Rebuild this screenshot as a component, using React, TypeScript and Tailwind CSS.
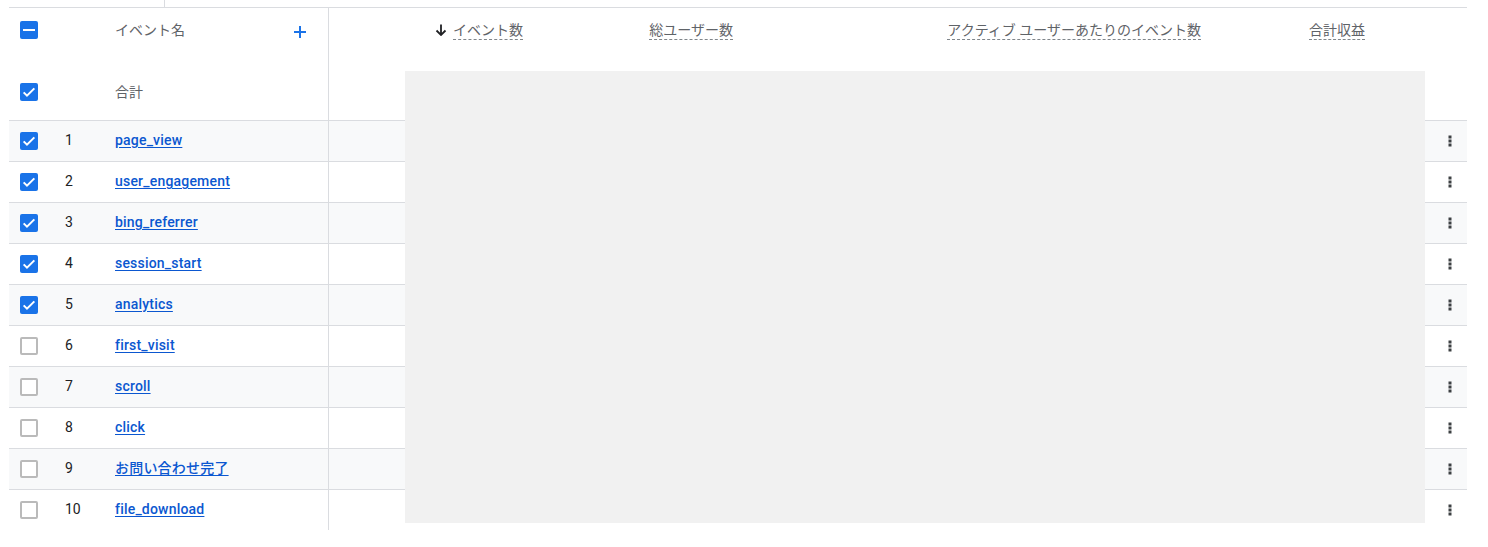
import React from 'react';

const rows = [
  { name: 'page_view', checked: true },
  { name: 'user_engagement', checked: true },
  { name: 'bing_referrer', checked: true },
  { name: 'session_start', checked: true },
  { name: 'analytics', checked: true },
  { name: 'first_visit', checked: false },
  { name: 'scroll', checked: false },
  { name: 'click', checked: false },
  { name: 'お問い合わせ完了', checked: false },
  { name: 'file_download', checked: false },
];

function Checkbox({ state }: { state: 'checked' | 'unchecked' | 'mixed' }) {
  if (state === 'unchecked') {
    return <div className="w-[18px] h-[18px] rounded-[2px] border-2 border-[#bababa] bg-white shrink-0" />;
  }
  return (
    <div className="w-[18px] h-[18px] rounded-[2px] bg-[#1a73e8] flex items-center justify-center shrink-0">
      {state === 'checked' ? (
        <svg width="16" height="16" viewBox="0 0 24 24">
          <path d="M4 12.5l5 5L20 6.5" fill="none" stroke="#fff" strokeWidth="3" />
        </svg>
      ) : (
        <div className="w-[12px] h-[2px] bg-white" />
      )}
    </div>
  );
}

function Dots() {
  return (
    <svg width="4" height="12" viewBox="0 0 4 12">
      <rect x="0.5" y="0.5" width="3" height="3" fill="#3c4043" />
      <rect x="0.5" y="4.5" width="3" height="3" fill="#3c4043" />
      <rect x="0.5" y="8.5" width="3" height="3" fill="#3c4043" />
    </svg>
  );
}

function HeadLabel({ children }: { children: React.ReactNode }) {
  return (
    <span className="inline-block leading-[18px] border-b border-dashed border-[#80868b] text-[#5f6368]">{children}</span>
  );
}

const gridCols = 'grid grid-cols-[320px_210px_210px_468px_164px_44px_42px]';

export default function App() {
  return (
    <div
      className="relative w-[1488px] h-[547px] bg-white text-[14px] overflow-hidden"
      style={{ fontFamily: 'Roboto, "Noto Sans CJK JP", sans-serif' }}
    >
      <div className="h-[7px] ml-[164px] border-l border-[#dadce0]" />
      <div className="ml-[9px] w-[1458px] border-t border-[#dadce0]">
        {/* Header */}
        <div className={`${gridCols} border-b border-[#dadce0]`}>
          <div className="border-r border-[#dadce0]">
            <div className="h-[44px] flex items-center pl-[11px] pr-[22px]">
              <Checkbox state="mixed" />
              <div className="w-[50px] ml-[27px]" />
              <span className="text-[#5f6368] flex-1">イベント名</span>
              <svg width="12" height="12" viewBox="0 0 12 12" className="mt-[3px]">
                <path d="M6 0v12M0 6h12" stroke="#1a73e8" strokeWidth="2" />
              </svg>
            </div>
            <div className="h-[68px] pt-[12px] flex items-center pl-[11px]">
              <Checkbox state="checked" />
              <div className="w-[50px] ml-[27px]" />
              <span className="text-[#5f6368]">合計</span>
            </div>
          </div>
          <div className="h-[44px] flex items-center justify-end pr-[16px] gap-[6px]">
            <svg width="12" height="12" viewBox="0 0 12 12">
              <path d="M6 0.5v10M1.5 6.5L6 11l4.5-4.5" fill="none" stroke="#202124" strokeWidth="1.8" />
            </svg>
            <HeadLabel>イベント数</HeadLabel>
          </div>
          <div className="h-[44px] flex items-center justify-end pr-[16px]">
            <HeadLabel>総ユーザー数</HeadLabel>
          </div>
          <div className="h-[44px] flex items-center justify-end pr-[16px]">
            <HeadLabel>アクティブ ユーザーあたりのイベント数</HeadLabel>
          </div>
          <div className="h-[44px] flex items-center justify-end pr-[16px]">
            <HeadLabel>合計収益</HeadLabel>
          </div>
          <div />
          <div />
        </div>

        {/* Rows */}
        {rows.map((r, i) => (
          <div
            key={r.name}
            className={`${gridCols} ${i < rows.length - 1 ? 'h-[41px] border-b border-[#dadce0]' : 'h-[40px]'} ${
              i % 2 === 0 ? 'bg-[#f8f9fa]' : 'bg-white'
            }`}
          >
            <div className="flex items-center pl-[11px] pb-[1px] border-r border-[#dadce0]">
              <Checkbox state={r.checked ? 'checked' : 'unchecked'} />
              <span className="w-[50px] ml-[27px] text-[#202124]">{i + 1}</span>
              <a className="text-[#0b57d0] underline underline-offset-2 font-medium tracking-[0.2px]">{r.name}</a>
            </div>
            <div />
            <div />
            <div />
            <div />
            <div />
            <div className="flex items-center pl-[23px] pb-[1px]">
              <Dots />
            </div>
          </div>
        ))}
      </div>

      {/* loading placeholder overlay */}
      <div className="absolute left-[405px] top-[71px] w-[1020px] h-[452px] bg-[#f1f1f1]" />
    </div>
  );
}
